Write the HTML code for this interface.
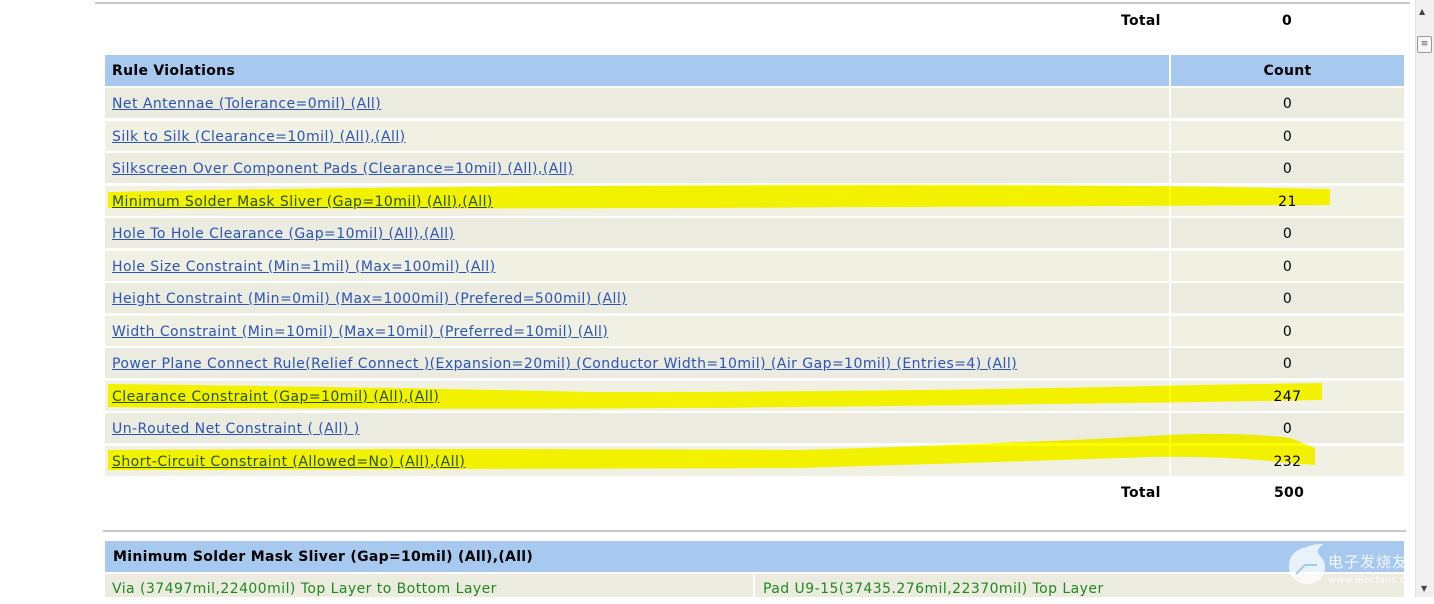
<!DOCTYPE html>
<html><head><meta charset="utf-8"><style>
body{margin:0;width:1434px;height:597px;overflow:hidden;background:#fff;font-family:"DejaVu Sans","Liberation Sans",sans-serif;font-size:14px;letter-spacing:0.45px;position:relative}
.a{position:absolute}
.row{position:absolute;left:105px;width:1299px;height:30px}
.c1{position:absolute;left:0;top:0;width:1064px;height:30px;line-height:32px;padding-left:7px;box-sizing:border-box;white-space:nowrap}
.c2{position:absolute;left:1064px;top:0;width:233px;height:30px;line-height:32px;text-align:center;border-left:2px solid #fff}
a{color:#2a55b5;text-decoration:underline}
.bd{font-weight:bold;font-size:14px;letter-spacing:0.3px}
</style></head><body>
<div class="a" style="left:95px;top:2px;width:1315px;height:2px;background:#c8c8c8"></div>
<div class="a bd" style="left:1121px;top:13px">Total</div>
<div class="a bd" style="left:1282px;top:13px">0</div>

<div class="row" style="top:55px;height:31px;background:#a7c9ef">
<div class="c1 bd" style="height:31px;line-height:33px;background:#a7c9ef;border-right:2px solid #fff;width:1066px">Rule Violations</div>
<div class="c2 bd" style="height:31px;line-height:33px;border-left:0;left:1066px">Count</div></div>

<div class="row" style="top:88px;background:#ecebdf"><div class="c1"><a>Net Antennae (Tolerance=0mil) (All)</a></div><div class="c2">0</div></div>
<div class="row" style="top:120.5px;background:#f1f1e3"><div class="c1"><a>Silk to Silk (Clearance=10mil) (All),(All)</a></div><div class="c2">0</div></div>
<div class="row" style="top:153px;background:#ecebdf"><div class="c1"><a>Silkscreen Over Component Pads (Clearance=10mil) (All),(All)</a></div><div class="c2">0</div></div>
<div class="row" style="top:185.5px;background:#f1f1e3"><div class="c1"><a>Minimum Solder Mask Sliver (Gap=10mil) (All),(All)</a></div><div class="c2">21</div></div>
<div class="row" style="top:218px;background:#ecebdf"><div class="c1"><a>Hole To Hole Clearance (Gap=10mil) (All),(All)</a></div><div class="c2">0</div></div>
<div class="row" style="top:250.5px;background:#f1f1e3"><div class="c1"><a>Hole Size Constraint (Min=1mil) (Max=100mil) (All)</a></div><div class="c2">0</div></div>
<div class="row" style="top:283px;background:#ecebdf"><div class="c1"><a>Height Constraint (Min=0mil) (Max=1000mil) (Prefered=500mil) (All)</a></div><div class="c2">0</div></div>
<div class="row" style="top:315.5px;background:#f1f1e3"><div class="c1"><a>Width Constraint (Min=10mil) (Max=10mil) (Preferred=10mil) (All)</a></div><div class="c2">0</div></div>
<div class="row" style="top:348px;background:#ecebdf"><div class="c1"><a>Power Plane Connect Rule(Relief Connect )(Expansion=20mil) (Conductor Width=10mil) (Air Gap=10mil) (Entries=4) (All)</a></div><div class="c2">0</div></div>
<div class="row" style="top:380.5px;background:#f1f1e3"><div class="c1"><a>Clearance Constraint (Gap=10mil) (All),(All)</a></div><div class="c2">247</div></div>
<div class="row" style="top:413px;background:#ecebdf"><div class="c1"><a>Un-Routed Net Constraint ( (All) )</a></div><div class="c2">0</div></div>
<div class="row" style="top:445.5px;background:#f1f1e3"><div class="c1"><a>Short-Circuit Constraint (Allowed=No) (All),(All)</a></div><div class="c2">232</div></div>

<svg class="a" style="left:0;top:0;mix-blend-mode:multiply" width="1434" height="597">
<path d="M108 192 Q400 186 800 185 Q1100 184 1330 189 L1330 205 Q1100 206 700 208 Q300 209 108 208 Z" fill="#ffff00"/>
<path d="M108 384 Q300 386 600 392 Q900 392 1200 385 L1322 383 L1322 400 Q1100 404 700 408 Q350 410 108 407 Z" fill="#ffff00"/>
<path d="M108 450 Q500 448 800 450 Q1000 444 1150 436 Q1230 431 1290 438 L1315 448 L1315 465 L1290 463 Q1230 456 1150 457 Q1000 462 800 468 Q500 469 108 470 Z" fill="#ffff00"/>
</svg>

<div class="a bd" style="left:1121px;top:485px">Total</div>
<div class="a bd" style="left:1274px;top:485px">500</div>
<div class="a" style="left:103px;top:530px;width:1303px;height:2px;background:#c8c8c8"></div>
<div class="a bd" style="left:105px;top:541px;width:1299px;height:31px;background:#a7c9ef;line-height:32px;padding-left:8px;box-sizing:border-box">Minimum Solder Mask Sliver (Gap=10mil) (All),(All)</div>
<div class="a" style="left:105px;top:574px;width:648px;height:23px;background:#ecebdf;line-height:30px;padding-left:7px;box-sizing:border-box;color:#1e8a1e">Via (37497mil,22400mil) Top Layer to Bottom Layer</div>
<div class="a" style="left:755px;top:574px;width:649px;height:23px;background:#ecebdf;line-height:30px;padding-left:8px;box-sizing:border-box;color:#1e8a1e">Pad U9-15(37435.276mil,22370mil) Top Layer</div>
<svg class="a" style="left:1285px;top:543px" width="45" height="45"><path d="M22 4 C10 6 3 14 4 25 C5 36 14 42 24 41 C35 40 41 31 40 22 C39 16 35 14 33 10 C32 6 36 3 38 1 C31 1 26 2 22 4Z" fill="rgba(255,255,255,.75)"/><path d="M11 31 L20 22 L32 22" stroke="#a7c9ef" stroke-width="2" fill="none"/></svg>
<div class="a" style="left:1328px;top:551px;color:rgba(255,255,255,.85);font-size:15px;font-family:'Noto Sans CJK SC',sans-serif;letter-spacing:1px">电子发烧友</div>
<div class="a" style="left:1328px;top:575px;color:rgba(255,255,255,.9);font-size:10px;letter-spacing:0">www.elecfans.com</div>

<div class="a" style="left:1415px;top:0;width:19px;height:597px;background:#f0f0f0;border-left:1px solid #e2e2e2"></div>
<div class="a" style="left:1419px;top:7px;font-size:8px;color:#444">▲</div>
<div class="a" style="left:1417px;top:36px;width:13px;height:15px;background:#f6f6f6;border:1px solid #999;border-radius:2px;text-align:center;font-size:9px;line-height:15px;color:#555;letter-spacing:0">≡</div>
<div class="a" style="left:1421px;top:584px;font-size:8px;color:#444">▼</div>
</body></html>
